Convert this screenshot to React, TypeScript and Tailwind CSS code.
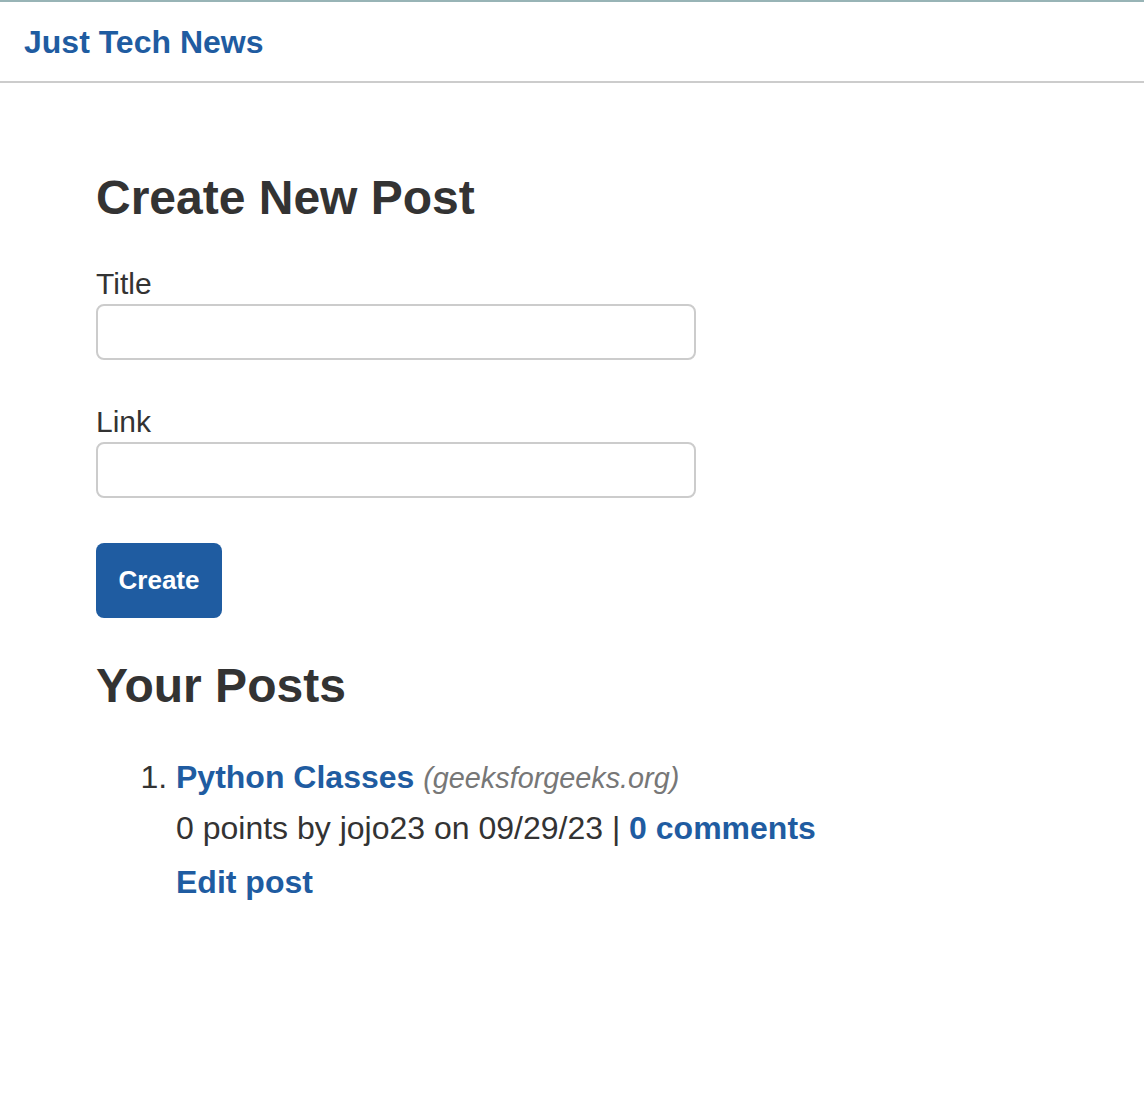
const posts = [
  {
    id: 1,
    title: 'Python Classes',
    host: 'geeksforgeeks.org',
    points: 0,
    user: 'jojo23',
    date: '09/29/23',
    comments: 0,
  },
]

function Field({ label }: { label: string }) {
  return (
    <div className="flex flex-col">
      <label className="text-[30px] leading-[36px]">{label}</label>
      <input
        type="text"
        className="mt-[2px] h-[56px] w-[600px] rounded-lg border-2 border-[#cccccc] bg-white px-3 text-[28px] outline-none"
      />
    </div>
  )
}

export default function App() {
  return (
    <div className="min-h-screen bg-white text-[#333333] [font-family:'Liberation_Sans',Arial,sans-serif]">
      <header className="flex h-[83px] items-center border-t-2 border-b-2 border-t-[#98b4b6] border-b-[#cccccc] px-6">
        <a href="#" className="text-[32px] font-bold leading-9 text-[#1f5ca1]">
          Just Tech News
        </a>
      </header>

      <main className="pl-[96px]">
        <h2 className="mt-[87px] text-[48px] font-bold leading-[56px]">Create New Post</h2>

        <form className="mt-10 flex flex-col gap-[44px]" onSubmit={(e) => e.preventDefault()}>
          <Field label="Title" />
          <Field label="Link" />
        </form>

        <button className="mt-[45px] h-[75px] w-[126px] rounded-lg bg-[#1f5ca1] text-[26px] font-bold text-white">
          Create
        </button>

        <h2 className="mt-[40px] text-[48px] font-bold leading-[56px]">Your Posts</h2>

        <ol className="mt-[38px] list-decimal pl-[80px] text-[32px] leading-[50px]">
          {posts.map((p) => (
            <li key={p.id}>
              <div>
                <a href="#" className="font-bold text-[#1f5ca1]">
                  {p.title}
                </a>{' '}
                <span className="text-[28.8px] italic text-[#777777]">({p.host})</span>
              </div>
              <div>
                {p.points} points by {p.user} on {p.date} |{' '}
                <a href="#" className="font-bold text-[#1f5ca1]">
                  {p.comments} comments
                </a>
              </div>
              <div className="mt-1">
                <a href="#" className="font-bold text-[#1f5ca1]">
                  Edit post
                </a>
              </div>
            </li>
          ))}
        </ol>
      </main>
    </div>
  )
}
